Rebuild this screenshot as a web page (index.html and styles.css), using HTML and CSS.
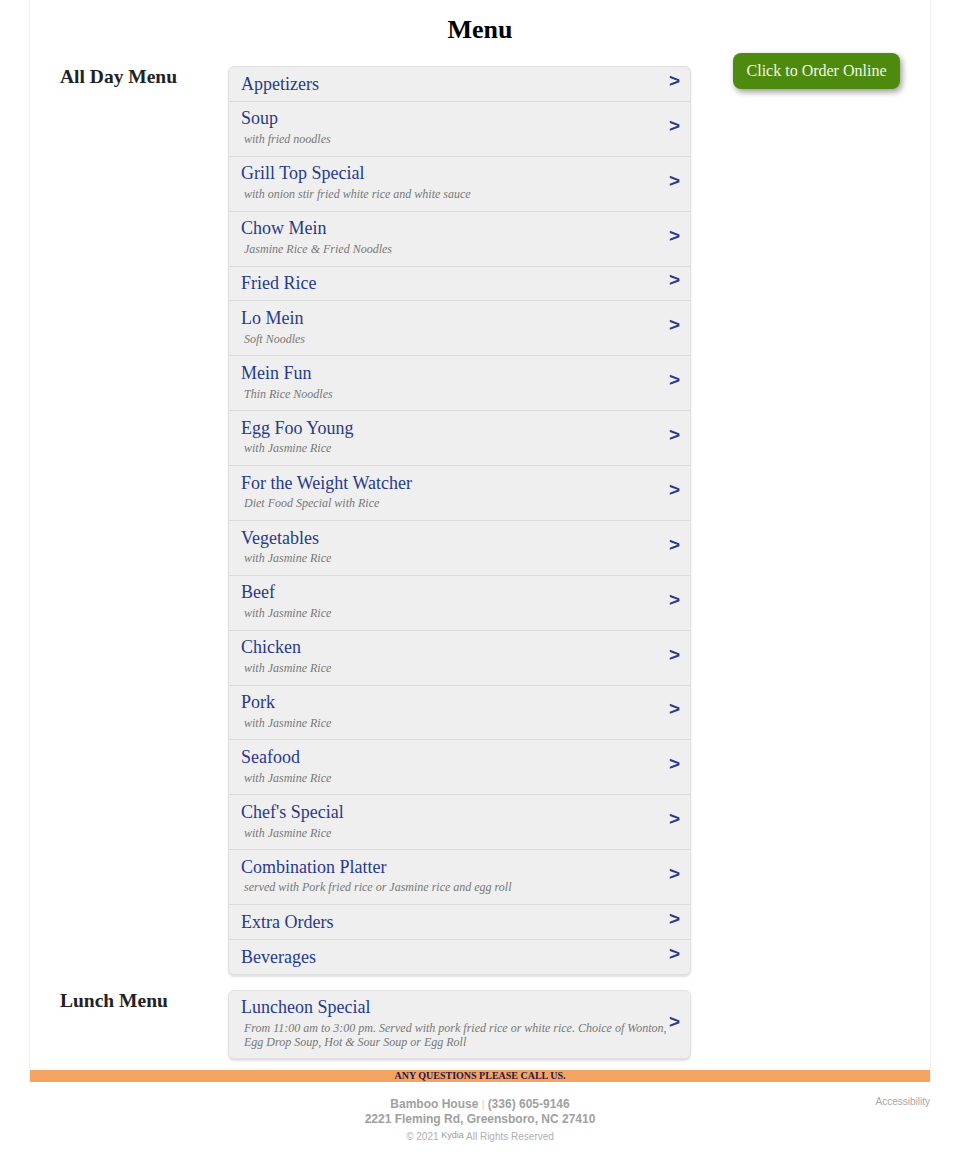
FILE: index.html
```html
<!DOCTYPE html>
<html>
<head>
<meta charset="utf-8">
<title>Menu</title>
<link rel="stylesheet" href="styles.css">
</head>
<body>
<div class="page">
  <h1 class="page-title">Menu</h1>
  <div class="layout">
    <div class="sections">
      <section class="menu-section">
        <h2 class="section-label">All Day Menu</h2>
        <div class="panel">
          <a class="row"><div class="row-text"><div class="row-title">Appetizers</div></div><span class="arrow">&gt;</span></a>
          <a class="row"><div class="row-text"><div class="row-title">Soup</div><div class="row-sub">with fried noodles</div></div><span class="arrow">&gt;</span></a>
          <a class="row"><div class="row-text"><div class="row-title">Grill Top Special</div><div class="row-sub">with onion stir fried white rice and white sauce</div></div><span class="arrow">&gt;</span></a>
          <a class="row"><div class="row-text"><div class="row-title">Chow Mein</div><div class="row-sub">Jasmine Rice &amp; Fried Noodles</div></div><span class="arrow">&gt;</span></a>
          <a class="row"><div class="row-text"><div class="row-title">Fried Rice</div></div><span class="arrow">&gt;</span></a>
          <a class="row"><div class="row-text"><div class="row-title">Lo Mein</div><div class="row-sub">Soft Noodles</div></div><span class="arrow">&gt;</span></a>
          <a class="row"><div class="row-text"><div class="row-title">Mein Fun</div><div class="row-sub">Thin Rice Noodles</div></div><span class="arrow">&gt;</span></a>
          <a class="row"><div class="row-text"><div class="row-title">Egg Foo Young</div><div class="row-sub">with Jasmine Rice</div></div><span class="arrow">&gt;</span></a>
          <a class="row"><div class="row-text"><div class="row-title">For the Weight Watcher</div><div class="row-sub">Diet Food Special with Rice</div></div><span class="arrow">&gt;</span></a>
          <a class="row"><div class="row-text"><div class="row-title">Vegetables</div><div class="row-sub">with Jasmine Rice</div></div><span class="arrow">&gt;</span></a>
          <a class="row"><div class="row-text"><div class="row-title">Beef</div><div class="row-sub">with Jasmine Rice</div></div><span class="arrow">&gt;</span></a>
          <a class="row"><div class="row-text"><div class="row-title">Chicken</div><div class="row-sub">with Jasmine Rice</div></div><span class="arrow">&gt;</span></a>
          <a class="row"><div class="row-text"><div class="row-title">Pork</div><div class="row-sub">with Jasmine Rice</div></div><span class="arrow">&gt;</span></a>
          <a class="row"><div class="row-text"><div class="row-title">Seafood</div><div class="row-sub">with Jasmine Rice</div></div><span class="arrow">&gt;</span></a>
          <a class="row"><div class="row-text"><div class="row-title">Chef's Special</div><div class="row-sub">with Jasmine Rice</div></div><span class="arrow">&gt;</span></a>
          <a class="row"><div class="row-text"><div class="row-title">Combination Platter</div><div class="row-sub">served with Pork fried rice or Jasmine rice and egg roll</div></div><span class="arrow">&gt;</span></a>
          <a class="row"><div class="row-text"><div class="row-title">Extra Orders</div></div><span class="arrow">&gt;</span></a>
          <a class="row"><div class="row-text"><div class="row-title">Beverages</div></div><span class="arrow">&gt;</span></a>
        </div>
      </section>
      <section class="menu-section lunch">
        <h2 class="section-label">Lunch Menu</h2>
        <div class="panel">
          <a class="row"><div class="row-text"><div class="row-title">Luncheon Special</div><div class="row-sub">From 11:00 am to 3:00 pm. Served with pork fried rice or white rice. Choice of Wonton, Egg Drop Soup, Hot &amp; Sour Soup or Egg Roll</div></div><span class="arrow">&gt;</span></a>
        </div>
      </section>
    </div>
    <div class="aside">
      <a class="order-btn">Click to Order Online</a>
    </div>
  </div>
  <div class="call-bar">ANY QUESTIONS PLEASE CALL US.</div>
</div>
<footer class="footer">
  <div class="footer-main">
    <div class="footer-line"><span>Bamboo House</span> <span class="sep">|</span> <span>(336) 605-9146</span></div>
    <div class="footer-line">2221 Fleming Rd, Greensboro, NC 27410</div>
    <div class="copy">© 2021 <sup class="kydia">Kydia</sup> All Rights Reserved</div>
  </div>
  <div class="access">Accessibility</div>
</footer>
</body>
</html>
```

FILE: styles.css
```css
html, body {
  margin: 0;
  padding: 0;
  background: #fff;
}
body {
  font-family: "Liberation Serif", "Times New Roman", serif;
  color: #222;
}
.page {
  width: 900px;
  margin: 0 auto;
  border-left: 1px solid #f0f0f0;
  border-right: 1px solid #f0f0f0;
}
.page-title {
  margin: 0;
  padding-top: 14px;
  height: 39px;
  text-align: center;
  font-size: 26px;
  line-height: 32px;
  font-weight: bold;
  color: #000;
}
.layout {
  display: flex;
  align-items: flex-start;
}
.sections {
  padding-left: 30px;
  padding-top: 13px;
}
.menu-section {
  display: flex;
  align-items: flex-start;
}
.menu-section.lunch {
  margin-top: 15px;
}
.section-label {
  width: 168px;
  margin: 0;
  font-size: 19.5px;
  line-height: 22px;
  font-weight: bold;
  color: #222;
}
.panel {
  width: 461px;
  background: #efefef;
  border: 1px solid #e0e0e0;
  border-radius: 6px;
  box-shadow: 0 2px 2px rgba(0, 0, 0, 0.12);
  overflow: hidden;
}
.row {
  display: flex;
  align-items: center;
  padding: 6.6px 10px 6.6px 12px;
  border-bottom: 1px solid #dadada;
  text-decoration: none;
}
.row:last-child {
  border-bottom: none;
}
.row-text {
  flex: 1;
}
.row-title {
  font-size: 18px;
  line-height: 20.7px;
  color: #283a8c;
}
.row-sub {
  margin: 4px 0 2.2px 3px;
  font-size: 12px;
  line-height: 13.8px;
  font-style: italic;
  color: #777;
}
.arrow {
  flex: none;
  margin-top: -6px;
  font-family: "Liberation Sans", Arial, sans-serif;
  font-weight: bold;
  font-size: 19px;
  line-height: 22px;
  color: #283a8c;
}
.aside {
  padding-left: 42px;
}
.order-btn {
  display: block;
  width: 167px;
  height: 36px;
  box-sizing: border-box;
  background: #4e8a0e;
  color: #f0fae6;
  font-size: 16px;
  line-height: 36px;
  text-align: center;
  border-radius: 8px;
  box-shadow: 2px 3px 6px rgba(0, 0, 0, 0.4);
  text-decoration: none;
}
.call-bar {
  margin-top: 11px;
  height: 12px;
  background: #f4a460;
  text-align: center;
  font-size: 10px;
  line-height: 12px;
  font-weight: bold;
  color: #2b1447;
}
.footer {
  width: 900px;
  margin: 0 auto;
  position: relative;
  padding-top: 15px;
  font-family: "Liberation Sans", Arial, sans-serif;
  text-align: center;
}
.footer-line {
  font-size: 12px;
  line-height: 14px;
  font-weight: bold;
  color: #a0a0a0;
}
.sep {
  font-weight: normal;
  font-size: 10px;
  color: #ccc;
}
.copy {
  margin-top: 2px;
  font-size: 10px;
  line-height: 14px;
  color: #b0b0b0;
}
.kydia {
  font-size: 9px;
  vertical-align: 2px;
  color: #999;
}
.access {
  position: absolute;
  right: 0;
  top: 14px;
  font-size: 10px;
  color: #a8a8a8;
}
```
